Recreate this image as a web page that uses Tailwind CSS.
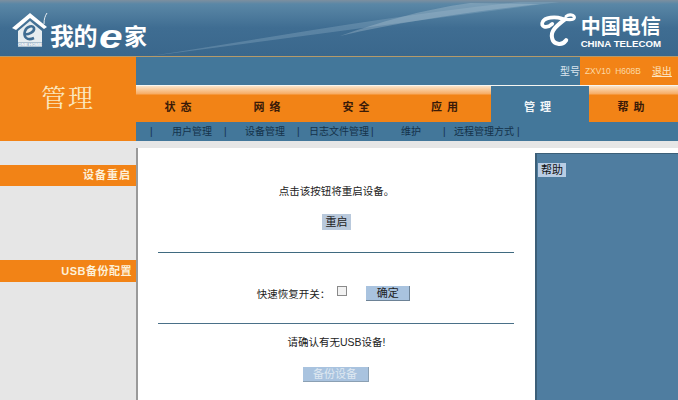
<!DOCTYPE html>
<html lang="zh-CN">
<head>
    <meta charset="UTF-8">
    <title>管理</title>
    <script src="https://cdn.jsdelivr.net/npm/@tailwindcss/browser@4"></script>
</head>
<body class="w-[678px] h-[400px] overflow-hidden bg-white font-['Liberation_Sans','Noto_Sans_CJK_SC',sans-serif] text-[10.5px] text-[#222]">

    <!-- banner -->
    <header class="relative h-[57px] flex items-start justify-between overflow-hidden border-b border-[#b59a6a] bg-[linear-gradient(180deg,#7d8f9f_0px,#5a87a6_4px,#3f6d92_28px,#3a678c_57px)]">
        <svg class="absolute inset-0" width="678" height="57" viewBox="0 0 678 57">
            <path d="M150 56 C290 38 420 20 560 2 L520 2 C400 14 280 36 150 56Z" fill="#8fb0c6" opacity=".35"/>
            <path d="M340 36 C400 22 470 12 540 4 L470 3 C420 10 380 22 340 36Z" fill="#c4d4de" opacity=".3"/>
        </svg>
        <div class="relative flex items-start ml-[12px] mt-[11px]">
            <svg width="37" height="37" viewBox="0 0 37 37" fill="none">
                <path d="M0 17 L18 2 L35 16 L32 18 L18 7 L4 19Z" fill="#fff"/>
                <path d="M32 13 C32 8 33 5 35 2" stroke="#e8eef2" stroke-width="1"/>
                <path d="M6 20 L18 10 L30 20 V36 H6Z" fill="#e6edf0"/>
                <path d="M12 23 C16 24 23 21 22 17 C21 14 15 15 13 20 C11 26 15 30 22 27" stroke="#3f6d92" stroke-width="2.6" fill="none"/>
                <rect x="6" y="31" width="24" height="5" fill="#3f6d92" opacity=".35"/>
                <text x="18" y="35.4" text-anchor="middle" font-size="4.4" font-weight="700" fill="#fff">ONE HOME</text>
            </svg>
            <span class="text-[24px] leading-none font-bold text-white ml-[1px] mt-[14px] tracking-[-0.5px]">我的</span>
            <span class="w-[25px] ml-[2px] mt-[8px] font-['Liberation_Sans',sans-serif] italic font-bold text-[34px] leading-none text-white scale-x-125 origin-left">e</span>
            <span class="text-[23px] leading-none font-bold text-white mt-[15px]">家</span>
        </div>
        <div class="relative flex items-start mr-[17px] mt-[12px]">
            <svg class="mt-[1px]" width="40" height="34" viewBox="24 20 110 100" fill="none" stroke="#fff" stroke-linecap="round">
                <path d="M62 52 C45 68 26 60 34 46 C40 32 70 30 90 36" stroke-width="11"/>
                <path d="M90 36 C105 40 125 42 127 34 C129 26 112 22 103 30" stroke-width="9"/>
                <path d="M100 38 C78 55 55 72 62 95 C66 112 90 118 103 100" stroke-width="12"/>
            </svg>
            <div class="ml-[3px] flex flex-col items-center">
                <span class="text-[20px] leading-[24px] mt-[3px] font-bold text-white">中国电信</span>
                <span class="text-[9.7px] leading-[10px] font-bold text-white">CHINA TELECOM</span>
            </div>
        </div>
    </header>

    <div class="flex h-[84px]">
        <div class="w-[136px] bg-[#f28316] flex items-center justify-center">
            <span class="font-['Liberation_Serif','Noto_Serif_CJK_SC','Noto_Sans_CJK_SC',serif] text-[25px] text-[#fbe7bf] tracking-[2px]">管理</span>
        </div>
        <div class="flex-1 flex flex-col">
            <!-- model line -->
            <div class="h-[28px] bg-[#43779a] flex justify-end">
                <span class="self-center text-[10px] text-[#dbe6ee]">型号</span>
                <div class="w-[98px] bg-[#f28316] flex items-center text-[8.4px] text-[#fbd9a6]">
                    <span class="ml-[5px]">ZXV10&nbsp; H608B</span>
                    <a class="ml-[11px] text-[10px] underline text-[#fde7c4]">退出</a>
                </div>
            </div>
            <!-- tabs -->
            <nav class="h-[37px] flex border-t border-[#f6f6f2] text-[11px] font-bold tracking-[5px] text-[#3a1a08]">
                <div class="w-[89px] flex items-center justify-center pt-[7px] bg-[linear-gradient(180deg,#fbe3c8_0px,#f7ab62_8px,#f28316_9px)]">状态</div>
                <div class="w-[89px] flex items-center justify-center pt-[7px] bg-[linear-gradient(180deg,#fbe3c8_0px,#f7ab62_8px,#f28316_9px)]">网络</div>
                <div class="w-[89px] flex items-center justify-center pt-[7px] bg-[linear-gradient(180deg,#fbe3c8_0px,#f7ab62_8px,#f28316_9px)]">安全</div>
                <div class="w-[88px] flex items-center justify-center pt-[7px] bg-[linear-gradient(180deg,#fbe3c8_0px,#f7ab62_8px,#f28316_9px)]">应用</div>
                <div class="w-[98px] flex items-center justify-center pt-[7px] bg-[#43779a] text-[#f2f6f8]">管理</div>
                <div class="flex-1 flex items-center justify-center pt-[7px] bg-[linear-gradient(180deg,#fbe3c8_0px,#f7ab62_8px,#f28316_9px)]">帮助</div>
            </nav>
            <!-- sub menu -->
            <div class="h-[19px] bg-[#43779a] flex items-center text-[10px] text-[#14324a]">
                <span class="ml-[14px] w-[22px]">|</span>
                <span class="w-[52px]">用户管理</span>
                <span class="w-[21px]">|</span>
                <span class="w-[52px]">设备管理</span>
                <span class="w-[12px]">|</span>
                <span class="w-[62px]">日志文件管理</span>
                <span class="w-[30px]">|</span>
                <span class="w-[42px]">维护</span>
                <span class="w-[11px]">|</span>
                <span class="w-[63px]">远程管理方式</span>
                <span>|</span>
            </div>
        </div>
    </div>

    <div class="h-[7px] bg-[#e6e6e6]"></div>

    <div class="flex h-[252px]">
        <!-- left side -->
        <aside class="w-[136px] bg-[#e6e6e6] pt-[17px] text-[11px] font-bold text-[#fdf0d8] tracking-[1px]">
            <div class="h-[21px] bg-[#f28316] flex items-center justify-end pr-[5px]">设备重启</div>
            <div class="h-[74px]"></div>
            <div class="h-[22px] bg-[#f28316] flex items-center justify-end pr-[4px] tracking-[0.5px]">USB备份配置</div>
        </aside>

        <!-- centre -->
        <main class="w-[399px] bg-white border-l-2 border-[#9a9a9a] flex flex-col items-center relative">
            <p class="mt-[36px] h-[14px] leading-[14px]">点击该按钮将重启设备。</p>
            <button class="mt-[16px] w-[29px] h-[16px] bg-[#b9c9dc] text-[11px] leading-none">重启</button>
            <hr class="mt-[22px] w-[356px] border-0 h-px bg-[#3f6a80] -ml-[2px]">
            <div class="mt-[33px] flex items-start -ml-[6px] h-[16px]">
                <span class="leading-[14px] mt-[1px]">快速恢复开关：</span>
                <span class="ml-[7px] w-[10px] h-[10px] border border-[#8a8a8a] bg-[#f2f2f2]"></span>
                <button class="ml-[19px] w-[44px] h-[15px] bg-[#a9c3df] border-r border-b border-[#6d8296] text-[11px] leading-none">确定</button>
            </div>
            <hr class="mt-[21px] w-[356px] border-0 h-px bg-[#4a7088] -ml-[2px]">
            <p class="mt-[11px] h-[14px] leading-[14px]">请确认有无USB设备!</p>
            <button class="mt-[18px] -ml-[2px] w-[66px] h-[15px] bg-[#a9c3df] border-r border-b border-[#8ba0b3] text-[11px] leading-none text-[#dfe8f1]">备份设备</button>
        </main>

        <!-- help -->
        <div class="flex-1 bg-white flex flex-col">
            <div class="h-[5px]"></div>
            <div class="flex-1 bg-[#4f7da0] border-l-2 border-t border-[#3c5f78] pl-[1px] pt-[9px]">
                <span class="inline-block px-[3px] h-[14px] leading-[14px] bg-[#b9cde4] text-[#111] text-[11px]">帮助</span>
            </div>
        </div>
    </div>
</body>
</html>
